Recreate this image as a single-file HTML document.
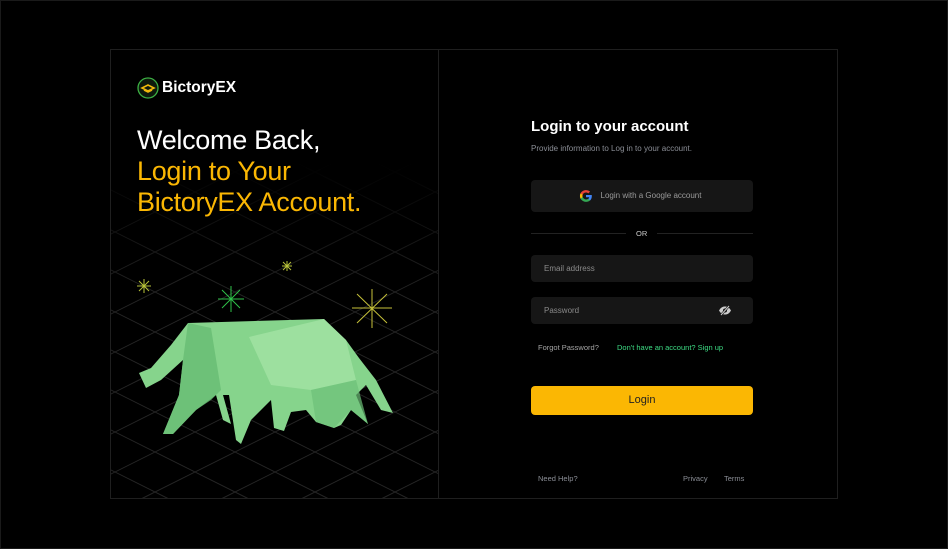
<!DOCTYPE html>
<html><head><meta charset="utf-8"><style>
*{margin:0;padding:0;box-sizing:border-box}
html,body{width:948px;height:549px;overflow:hidden}
body{background:#000;position:relative;font-family:"Liberation Sans",Arial,sans-serif}
.outer{position:absolute;left:0;top:0;width:948px;height:549px;border:1px solid #1a1a1a}
.frame{position:absolute;left:110px;top:49px;width:728px;height:450px;border:1px solid #1f1f1f}
.left{position:absolute;left:0;top:0;width:328px;height:448px;border-right:1px solid #1f1f1f;overflow:hidden}
.abs{position:absolute}
.h1{font-size:27px;line-height:31px;letter-spacing:-0.3px}
.inp{position:absolute;left:420px;width:222px;height:27px;background:#161616;border-radius:4px;color:#8a8a8a;font-size:8px;line-height:27px;padding-left:13px}
.sm{font-size:7.5px;color:#8b8e96}
</style></head><body>
<div class="outer"></div>
<div class="frame">
<div class="left">
<svg class="abs" style="left:0;top:0" width="328" height="448">
<defs><linearGradient id="fg" x1="0" y1="0" x2="0" y2="1"><stop offset="0.25" stop-color="#fff" stop-opacity="0"/><stop offset="0.55" stop-color="#fff" stop-opacity="1"/></linearGradient><mask id="m"><rect width="328" height="448" fill="url(#fg)"/></mask></defs>
<g stroke="#262626" stroke-width="1" mask="url(#m)">
<line x1="-200" y1="160" x2="400" y2="460"/><line x1="-200" y1="200" x2="400" y2="500"/><line x1="-200" y1="240" x2="400" y2="540"/><line x1="-200" y1="280" x2="400" y2="580"/><line x1="-200" y1="320" x2="400" y2="620"/><line x1="-200" y1="120" x2="400" y2="420"/><line x1="-160" y1="100" x2="400" y2="380"/><line x1="-80" y1="100" x2="400" y2="340"/><line x1="0" y1="100" x2="400" y2="300"/><line x1="80" y1="100" x2="400" y2="260"/><line x1="160" y1="100" x2="400" y2="220"/><line x1="240" y1="100" x2="400" y2="180"/>
<line x1="528" y1="160" x2="-72" y2="460"/><line x1="528" y1="200" x2="-72" y2="500"/><line x1="528" y1="240" x2="-72" y2="540"/><line x1="528" y1="280" x2="-72" y2="580"/><line x1="528" y1="320" x2="-72" y2="620"/><line x1="528" y1="120" x2="-72" y2="420"/><line x1="528" y1="80" x2="-72" y2="380"/><line x1="528" y1="40" x2="-72" y2="340"/><line x1="528" y1="0" x2="-72" y2="300"/><line x1="528" y1="-40" x2="-72" y2="260"/><line x1="528" y1="-80" x2="-72" y2="220"/>
</g>
<g stroke="#b9c43a" stroke-width="1"><line x1="33" y1="229" x2="33" y2="243"/><line x1="26" y1="236" x2="40" y2="236"/><line x1="28" y1="231" x2="38" y2="241"/><line x1="38" y1="231" x2="28" y2="241"/></g>
<g stroke="#b9c43a" stroke-width="1"><line x1="176" y1="211" x2="176" y2="221"/><line x1="171" y1="216" x2="181" y2="216"/><line x1="172" y1="212" x2="180" y2="220"/><line x1="180" y1="212" x2="172" y2="220"/></g>
<g stroke="#2fc24a" stroke-width="1"><line x1="120" y1="236" x2="120" y2="262"/><line x1="107" y1="249" x2="133" y2="249"/><line x1="111" y1="240" x2="129" y2="258"/><line x1="129" y1="240" x2="111" y2="258"/></g>
<g stroke="#c7c23a" stroke-width="1"><line x1="261" y1="239" x2="261" y2="278"/><line x1="241" y1="258" x2="281" y2="258"/><line x1="246" y1="244" x2="276" y2="273"/><line x1="276" y1="244" x2="246" y2="273"/></g>
<path d="M77 273 L213 269 L235 290 L248 308 L265 330 L282 363 L270 360 L255 335 L245 345 L257 374 L240 360 L230 375 L223 378 L205 372 L195 360 L180 362 L173 381 L163 378 L160 350 L140 370 L130 394 L125 390 L118 345 L112 345 L120 374 L112 370 L105 345 L85 360 L62 384 L52 384 L68 345 L72 310 L50 330 L35 338 L28 323 L40 318 L60 295 Z" fill="#86d48c"/>
<path d="M138 287 L213 269 L235 290 L245 330 L200 340 L160 335 Z" fill="#a3e2a4" opacity=".8"/>
<path d="M77 273 L100 278 L110 340 L100 350 L85 360 L62 384 L52 384 L68 345 L72 310 Z" fill="#67bb73" opacity=".8"/>
<path d="M200 340 L245 330 L257 374 L240 360 L223 378 L205 372 Z" fill="#6cc077" opacity=".7"/>
</svg>
<svg class="abs" style="left:26px;top:27px" width="22" height="22" viewBox="0 0 22 22"><circle cx="11" cy="11" r="10" fill="#0d1a0d" stroke="#3cb043" stroke-width="1.3"/><path d="M5 11 L11 8 L17 11 L11 14 Z M7 13 L11 15 L15 13" fill="none" stroke="#f0b90b" stroke-width="1.6"/></svg>
<div class="abs" style="left:51px;top:27px;color:#fff;font-size:15.5px;font-weight:bold;line-height:22px">BictoryEX</div>
<div class="abs h1" style="left:26px;top:75px;color:#fff">Welcome Back,</div>
<div class="abs h1" style="left:26px;top:106px;color:#fbb703">Login to Your</div>
<div class="abs h1" style="left:26px;top:137px;color:#fbb703">BictoryEX Account.</div>
</div>
<div class="abs" style="left:420px;top:68px;color:#fff;font-size:15px;font-weight:bold">Login to your account</div>
<div class="abs sm" style="left:420px;top:94px;font-size:8px">Provide information to Log in to your account.</div>
<div class="abs" style="left:420px;top:130px;width:222px;height:32px;background:#161616;border-radius:4px;color:#9a9a9a;font-size:8px;line-height:32px;text-align:center;padding-left:18px">Login with a Google account
<svg class="abs" style="left:48px;top:9px" width="14" height="14" viewBox="0 0 24 24"><path d="M22 12.2c0-.7-.1-1.4-.2-2H12v3.9h5.6c-.2 1.3-1 2.4-2.1 3.1v2.6h3.4c2-1.8 3.1-4.5 3.1-7.6z" fill="#4285f4"/><path d="M12 22c2.8 0 5.2-.9 6.9-2.5l-3.4-2.6c-.9.6-2.1 1-3.5 1-2.7 0-5-1.8-5.8-4.3H2.7v2.7C4.4 19.7 7.9 22 12 22z" fill="#34a853"/><path d="M6.2 13.6c-.2-.6-.3-1.2-.3-1.8s.1-1.2.3-1.8V7.3H2.7C2 8.7 1.6 10.3 1.6 12s.4 3.3 1.1 4.7z" fill="#fbbc05"/><path d="M12 6c1.5 0 2.9.5 4 1.5l3-3C17.2 2.9 14.8 2 12 2 7.9 2 4.4 4.3 2.7 7.3l3.5 2.7C7 7.8 9.3 6 12 6z" fill="#ea4335"/></svg></div>
<div class="abs" style="left:420px;top:183px;width:95px;border-top:1px solid #222"></div>
<div class="abs" style="left:546px;top:183px;width:96px;border-top:1px solid #222"></div>
<div class="abs" style="left:525px;top:179px;color:#ccc;font-size:7.5px">OR</div>
<div class="inp" style="top:205px">Email address</div>
<div class="inp" style="top:247px">Password
<svg class="abs" style="left:187px;top:8px" width="14" height="11" viewBox="0 0 14 11"><path d="M1 5.5C3 2 5 1.5 7 1.5s4 .5 6 4c-2 3.5-4 4-6 4s-4-.5-6-4z" fill="#ccc"/><circle cx="7" cy="5.5" r="2" fill="#161616"/><line x1="3" y1="10" x2="11" y2="1" stroke="#161616" stroke-width="2.2"/><line x1="3" y1="10" x2="11" y2="1" stroke="#ccc" stroke-width="1"/></svg></div>
<div class="abs" style="left:427px;top:293px;color:#a5a5a5;font-size:7.5px">Forgot Password?</div>
<div class="abs" style="left:506px;top:293px;color:#3ddc84;font-size:7.5px">Don't have an account? Sign up</div>
<div class="abs" style="left:420px;top:336px;width:222px;height:29px;background:#fbb703;border-radius:4px;color:#222;font-size:11px;line-height:29px;text-align:center">Login</div>
<div class="abs sm" style="left:427px;top:424px">Need Help?</div>
<div class="abs sm" style="left:572px;top:424px">Privacy</div>
<div class="abs sm" style="left:613px;top:424px">Terms</div>
</div>
</body></html>
